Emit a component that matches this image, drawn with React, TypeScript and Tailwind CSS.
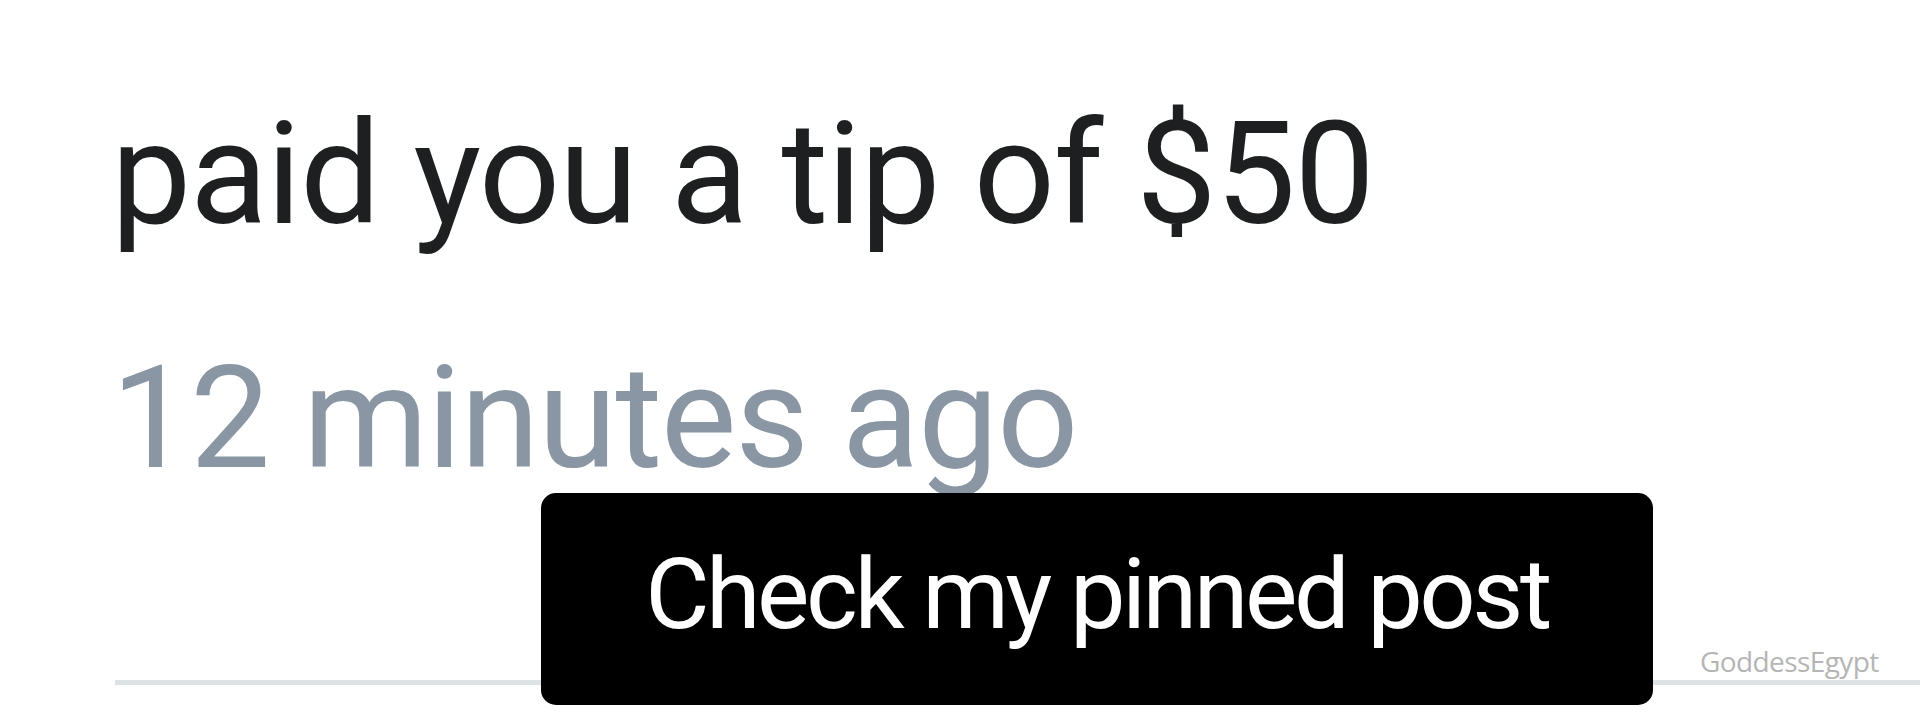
import React from "react";

export default function App() {
  return (
    <div className="relative w-[1920px] h-[721px] overflow-hidden bg-white" style={{ fontFamily: "Roboto, 'Noto Sans', sans-serif" }}>
      <div className="flex flex-col pl-[111px]">
        <div className="mt-[103px] text-[143px] leading-none text-[#1d1f21] tracking-[-1.3px] whitespace-nowrap">paid you a tip of $50</div>
        <div className="mt-[101px] text-[143px] leading-none text-[#8a96a3] tracking-[-1.4px] whitespace-nowrap">12 minutes ago</div>
      </div>
      <div className="absolute left-[115px] right-0 top-[680px] h-[5px] bg-[#dde3e5]" />
      <div className="absolute left-[541px] top-[493px] w-[1112px] h-[212px] rounded-[15px] bg-black flex items-center justify-center">
        <span className="text-[99px] leading-none text-white tracking-[-3.5px] whitespace-nowrap pb-[10px]">Check my pinned post</span>
      </div>
      <div className="absolute left-[1700px] top-[647px] text-[28px] leading-none text-[#b5b5b5] tracking-[-0.6px] whitespace-nowrap" style={{ fontFamily: "'Open Sans', sans-serif" }}>GoddessEgypt</div>
    </div>
  );
}
